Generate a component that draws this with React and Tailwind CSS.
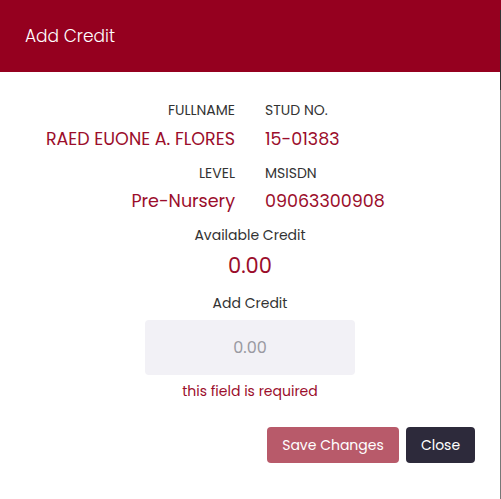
export default function App() {
  const font = { fontFamily: '"Poppins", "Open Sans", "Noto Sans", sans-serif' };
  return (
    <div className="flex w-[501px] h-[499px] bg-white" style={font}>
      <div className="w-[500px] flex flex-col">
        <div className="h-[72px] bg-[#95001f] flex items-center px-[25px]">
          <span className="text-white text-[17px] leading-6 font-light">Add Credit</span>
        </div>
        <div className="flex flex-col items-center pt-[29px]">
          <div className="grid grid-cols-2 gap-x-[30px] w-full">
            <div className="text-right text-[14px] leading-[18px] text-[#333]">FULLNAME</div>
            <div className="text-[14px] leading-[18px] text-[#333]">STUD NO.</div>
            <div className="text-right text-[17.5px] leading-6 text-[#9b0d2b] mt-[8px]">RAED EUONE A. FLORES</div>
            <div className="text-[17.5px] leading-6 text-[#9b0d2b] mt-[8px]">15-01383</div>
            <div className="text-right text-[14px] leading-[18px] text-[#333] mt-[13px]">LEVEL</div>
            <div className="text-[14px] leading-[18px] text-[#333] mt-[13px]">MSISDN</div>
            <div className="text-right text-[17.5px] leading-6 text-[#9b0d2b] mt-[7px]">Pre-Nursery</div>
            <div className="text-[17.5px] leading-6 text-[#9b0d2b] mt-[7px]">09063300908</div>
          </div>
          <div className="mt-[12px] text-[14px] leading-5 text-[#333]">Available Credit</div>
          <div className="mt-[7px] text-[21px] leading-7 text-[#9b0d2b]">0.00</div>
          <div className="mt-[13px] text-[14px] leading-5 text-[#333]">Add Credit</div>
          <div className="mt-[7px] w-[210px] h-[55px] rounded bg-[#f2f1f6] flex items-center justify-center text-[16px] text-[#9a9aa2]">0.00</div>
          <div className="mt-[6px] text-[14px] leading-5 text-[#9b0d2b]">this field is required</div>
          <div className="self-end mt-[26px] mr-[25px] flex gap-[7px]">
            <div className="h-[36px] w-[132px] rounded bg-[#b85a6a] text-white text-[14px] flex items-center justify-center">Save Changes</div>
            <div className="h-[36px] w-[69px] rounded bg-[#2d2a3b] text-white text-[14px] flex items-center justify-center">Close</div>
          </div>
        </div>
      </div>
      <div className="w-px flex flex-col">
        <div className="h-[10px] bg-[#95001f]"></div>
        <div className="h-[80px] bg-[#333]"></div>
        <div className="flex-1 bg-[#777]"></div>
      </div>
    </div>
  );
}
